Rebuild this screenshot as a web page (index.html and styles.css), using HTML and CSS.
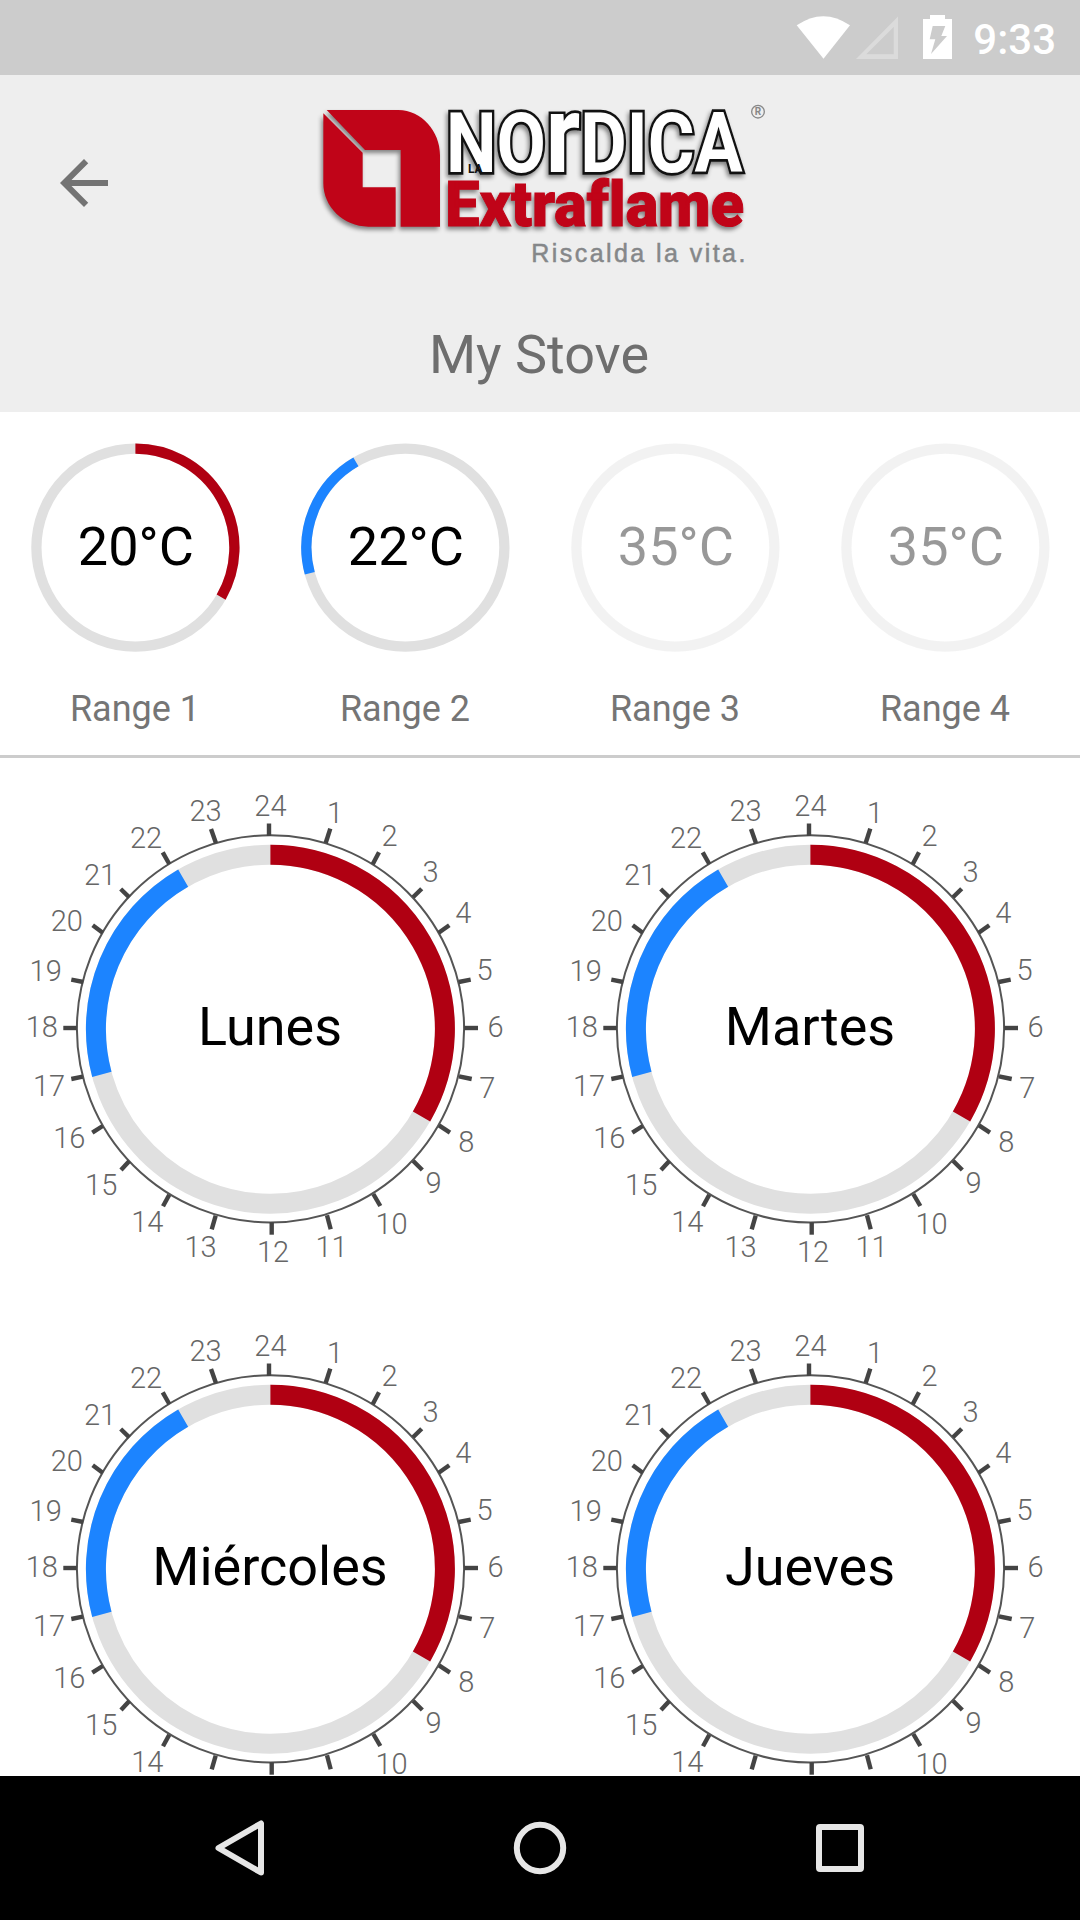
FILE: index.html
```
<!DOCTYPE html>
<html lang="es">
<head>
    <meta charset="UTF-8">
    <meta name="viewport" content="width=device-width, initial-scale=1.0">
    <title>My Stove</title>
    <link rel="stylesheet" href="styles.css">
</head>
<body>

<div class="status-bar">
    <svg class="status-icons" viewBox="790 0 170 75">
        <path class="wifi" d="M796.7 25.3Q823.3 7 850 25.3L823.5 58.7Z"/>
        <path class="signal" d="M856 59H898V16.5ZM866.3 54.3L893.7 27V54.3Z"/>
        <path class="battery" d="M923 19H930V15H945V19H952V59H923ZM932.7 26L929.7 39.3H935.3L931 54L947 36H941.3L945.3 26Z"/>
    </svg>
    <span class="clock">9:33</span>
</div>

<header class="header">
    <div class="header-row">
        <svg class="back" viewBox="0 0 24 24">
            <path d="M20 11H7.83l5.59-5.59L12 4l-8 8 8 8 1.41-1.41L7.83 13H20v-2z"/>
        </svg>
        <svg class="logo" viewBox="0 0 1440 540">
            <g class="logo-shadow">
                <path class="logo-red" d="M80 60H295C365 60 420 125 420 195V410H302V180H195Z"/>
                <path class="logo-red" d="M70 70L188 188V292H287V410H205C130 410 70 350 70 280Z"/>
                <text class="logo-nordica" x="438" y="245" textLength="890" lengthAdjust="spacingAndGlyphs">NO<tspan class="logo-tall">r</tspan>DICA</text>
                <text class="logo-extraflame" x="436" y="409" textLength="896" lengthAdjust="spacingAndGlyphs">Extraflame</text>
            </g>
            <text class="logo-la" x="504" y="248">LA</text>
            <text class="logo-claim" x="694" y="515" textLength="642">Riscalda la vita.</text>
            <circle class="logo-reg-ring" cx="1374" cy="65" r="19"/>
            <text class="logo-reg" x="1374" y="76">R</text>
        </svg>
    </div>
    <h1 class="title">My Stove</h1>
</header>

<section class="ranges" id="ranges"></section>
<main class="days" id="days"></main>

<nav class="nav-bar">
    <svg viewBox="0 0 60 60"><path d="M8.5 30L51 5.5V54.5Z"/></svg>
    <svg viewBox="0 0 60 60"><circle cx="30" cy="30" r="23.2"/></svg>
    <svg viewBox="0 0 60 60"><rect x="9" y="9" width="42" height="42" rx="1"/></svg>
</nav>

<script>
    const ranges = [
        { name: "Range 1", temp: 20, from: 0, to: 8, color: "red" },
        { name: "Range 2", temp: 22, from: 17, to: 22, color: "blue" },
        { name: "Range 3", temp: 35, disabled: true },
        { name: "Range 4", temp: 35, disabled: true }
    ];
    const days = ["Lunes", "Martes", "Miércoles", "Jueves"];

    // hour, tick start x/y, tick end x/y, label centre x, label baseline
    const hours = [
        [24, 269, 78, 269, 65.5, 270.4, 57.7],
        [1, 325.7, 85, 330.3, 70.7, 335, 65],
        [2, 372.7, 106.3, 379, 94.3, 389.5, 87.7],
        [3, 413, 139.3, 421.7, 130.7, 430.6, 123.8],
        [4, 438.7, 174.7, 449.3, 167.3, 463.3, 165.3],
        [5, 458.7, 224, 470.7, 221.7, 484.6, 221.5],
        [6, 464.3, 270, 478, 270, 495.5, 278.5],
        [7, 459, 318.3, 471.7, 321, 487.3, 339.5],
        [8, 439, 367.3, 450, 374.7, 466.2, 394.3],
        [9, 413, 402.7, 422.3, 412, 433.5, 434.5],
        [10, 373.3, 436, 380.3, 448, 391.6, 476.3],
        [11, 327, 457.3, 330.7, 471.3, 331.6, 499.3],
        [12, 271.7, 464.3, 271.7, 476.7, 273, 503.5],
        [13, 215.7, 457.7, 211.7, 471.3, 200.5, 498.7],
        [14, 169.3, 436.7, 163, 448.3, 147.3, 473.5],
        [15, 129.3, 403, 121, 412, 101.2, 436.5],
        [16, 102.7, 368, 92.3, 374.7, 69.3, 390],
        [17, 82.7, 318.7, 71.3, 321, 49, 338.3],
        [18, 76.7, 270, 63.3, 270, 41.8, 278.5],
        [19, 83.3, 224, 71.3, 221.7, 45.7, 223],
        [20, 102.7, 174.7, 92.7, 167.3, 66.8, 173.2],
        [21, 129.3, 139.3, 120.7, 131, 100, 126.7],
        [22, 169.3, 106, 162.7, 94.3, 146, 89.7],
        [23, 216, 85.3, 211, 71, 205.5, 62.7]
    ];

    // Arc between two hours of the 24h dial
    function arc(cx, cy, r, from, to, color) {
        const point = h => {
            const a = h / 24 * 2 * Math.PI;
            return `${cx + r * Math.sin(a)} ${cy - r * Math.cos(a)}`;
        };
        return `<path class="arc ${color}" d="M${point(from)}A${r} ${r} 0 0 1 ${point(to)}"/>`;
    }

    document.getElementById("ranges").innerHTML = ranges.map(r => `
        <div class="range">
            <svg class="range-dial ${r.disabled ? "disabled" : ""}" viewBox="0 0 270 270">
                <circle class="track" cx="135.4" cy="135.6" r="99"/>
                ${r.color ? arc(135.4, 135.6, 99, r.from, r.to, r.color) : ""}
                <text class="dial-text" x="135.8" y="153">${r.temp}°C</text>
            </svg>
            <span class="range-name">${r.name}</span>
        </div>`).join("");

    document.getElementById("days").innerHTML = days.map(day => `
        <svg class="day-dial" viewBox="0 0 540 540">
            <circle class="outline" cx="270.5" cy="270.9" r="193.6"/>
            ${hours.map(([h, x1, y1, x2, y2, lx, ly]) => `
                <line class="tick" x1="${x1}" y1="${y1}" x2="${x2}" y2="${y2}"/>
                <text class="hour" x="${lx}" y="${ly}">${h}</text>`).join("")}
            <circle class="track" cx="270.4" cy="271.2" r="174.5"/>
            ${arc(270.4, 271.2, 174.5, 0, 8, "red")}
            ${arc(270.4, 271.2, 174.5, 17, 22, "blue")}
            <text class="dial-text" x="270" y="287.3">${day}</text>
        </svg>`).join("");
</script>

</body>
</html>
```
FILE: styles.css
```
* {
    box-sizing: border-box;
}
body {
    margin: 0;
    width: 1080px;
    height: 1920px;
    display: flex;
    flex-direction: column;
    overflow: hidden;
    background-color: #fff;
    font-family: Roboto, sans-serif;
}
svg {
    display: block;
}

/* Status bar */
.status-bar {
    flex: none;
    height: 75px;
    padding-right: 24px;
    display: flex;
    justify-content: flex-end;
    align-items: center;
    gap: 13px;
    background-color: #ccc;
    color: #fff;
}
.status-icons {
    width: 170px;
    height: 75px;
    fill: #fff;
    fill-rule: evenodd;
}
.signal {
    fill: #dbdbdb;
}
.clock {
    font-size: 42px;
    font-weight: 500;
    line-height: 49px;
    padding-top: 3px;
}

/* Header */
.header {
    flex: none;
    height: 337px;
    padding-top: 15px;
    background-color: #eee;
}
.header-row {
    display: grid;
    grid-template-columns: 300px 480px;
}
.back {
    width: 72px;
    height: 72px;
    margin: 57px 0 0 48px;
    fill: #737373;
}
.logo {
    width: 480px;
    height: 180px;
}
.logo-shadow {
    filter: drop-shadow(-5px 9px 6px rgba(0, 0, 0, 0.45));
}
.logo-red,
.logo-extraflame {
    fill: #c00418;
}
.logo-nordica {
    font-size: 248px;
    font-weight: 700;
    fill: #fff;
    stroke: #111;
    stroke-width: 16px;
    stroke-linejoin: miter;
    paint-order: stroke;
}
/* the lowercase r is drawn as high as the capitals */
.logo-tall {
    font-size: 326px;
}
.logo-extraflame {
    font-size: 190px;
    font-weight: 900;
    font-variant-ligatures: none;
    stroke: #c00418;
    stroke-width: 3px;
}
.logo-la {
    font-size: 36px;
    font-weight: 700;
    fill: #111;
}
.logo-claim {
    font-family: "Liberation Sans", sans-serif;
    font-size: 75px;
    fill: #858789;
    stroke: #858789;
    stroke-width: 1.5px;
}
.logo-reg-ring {
    fill: none;
    stroke: #888;
    stroke-width: 4px;
}
.logo-reg {
    font-size: 30px;
    font-weight: 700;
    fill: #888;
    text-anchor: middle;
}
.title {
    margin: 53px 0 0;
    padding-right: 2px;
    font-size: 54px;
    font-weight: 400;
    line-height: 64px;
    text-align: center;
    color: #6e6e6e;
}

/* Temperature ranges */
.ranges {
    flex: none;
    height: 346px;
    display: grid;
    grid-template-columns: repeat(4, 270px);
    border-bottom: 3px solid #ccc;
}
.range {
    text-align: center;
}
.range-dial {
    width: 270px;
    height: 270px;
}
.range-dial.disabled {
    opacity: 0.4;
}
.range-dial .track,
.range-dial .arc {
    stroke-width: 10.3px;
}
.range-name {
    display: block;
    margin-top: 6px;
    font-size: 36px;
    line-height: 42px;
    color: #757575;
}
.track,
.arc {
    fill: none;
    stroke: #e0e0e0;
}
.red {
    stroke: #b00012;
}
.blue {
    stroke: #1c84ff;
}
.dial-text {
    font-size: 54px;
    fill: #000;
    text-anchor: middle;
}

/* Week programme */
.days {
    flex: 1;
    min-height: 0;
    overflow: hidden;
    display: grid;
    grid-template-columns: repeat(2, 540px);
    grid-auto-rows: 540px;
}
.day-dial .track,
.day-dial .arc {
    stroke-width: 20px;
}
.outline {
    fill: none;
    stroke: #555;
    stroke-width: 2px;
}
.tick {
    stroke: #444;
    stroke-width: 4.4px;
}
.hour {
    font-size: 29px;
    font-weight: 300;
    fill: #666;
    text-anchor: middle;
}

/* Navigation bar */
.nav-bar {
    flex: none;
    height: 144px;
    display: flex;
    justify-content: center;
    align-items: center;
    gap: 240px;
    background-color: #000;
}
.nav-bar svg {
    width: 60px;
    height: 60px;
    fill: none;
    stroke: #e6e6e6;
    stroke-width: 6px;
    stroke-linejoin: round;
}
```
